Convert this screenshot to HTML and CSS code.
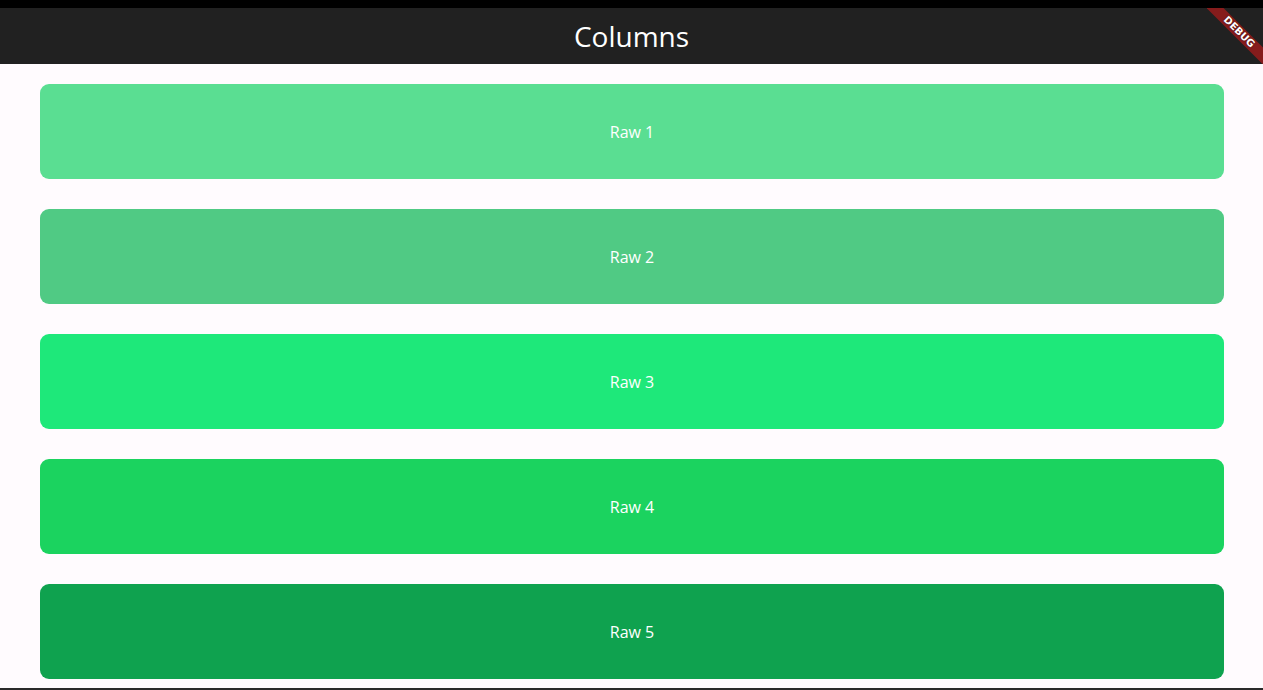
FILE: index.html
```html
<!DOCTYPE html>
<html>
<head>
<meta charset="utf-8">
<link rel="stylesheet" href="styles.css">
</head>
<body>
<div class="status"></div>
<header class="appbar"><h1 class="title">Columns</h1></header>
<main class="list">
  <div class="card c1">Raw 1</div>
  <div class="card c2">Raw 2</div>
  <div class="card c3">Raw 3</div>
  <div class="card c4">Raw 4</div>
  <div class="card c5">Raw 5</div>
</main>
<div class="bottom"></div>
<div class="banner-wrap"><div class="banner">DEBUG</div></div>
</body>
</html>
```
FILE: styles.css
```css
html, body { margin: 0; padding: 0; }
body {
  width: 1263px; height: 690px; overflow: hidden;
  background: #fffbfe;
  font-family: "Open Sans", "Noto Sans", sans-serif;
  display: flex; flex-direction: column;
  position: relative;
}
.status { height: 8px; background: #000; flex: none; }
.appbar {
  height: 56px; background: #212121; flex: none;
  display: flex; align-items: center; justify-content: center;
}
.title {
  margin: 0; color: #fff; font-weight: 400; font-size: 28px;
  font-family: "Open Sans", "Noto Sans", sans-serif;
  letter-spacing: 0;
}
.list {
  flex: 1;
  padding: 20px 39px 0 40px;
  display: flex; flex-direction: column; gap: 30px;
}
.card {
  height: 95px; border-radius: 9px;
  display: flex; align-items: center; justify-content: center;
  color: #fff; font-size: 16px;
  box-sizing: border-box;
}
.c1 { background: #5ade92; }
.c2 { background: #50ca84; }
.c3 { background: #1ee87a; }
.c4 { background: #1bd35f; }
.c5 { background: #0fa24f; }
.bottom { height: 2px; background: #2a2a2a; flex: none; }
.banner-wrap {
  position: absolute; top: 8px; right: 0; width: 56px; height: 56px; overflow: hidden;
}
.banner {
  position: absolute; top: 18px; left: -8px; width: 80px; height: 12px;
  transform: rotate(45deg);
  background: #861c1c;
  color: #fff; font-size: 10px; font-weight: 700;
  font-family: "DejaVu Sans", sans-serif;
  text-align: center; line-height: 12px;
  text-shadow: 0 0 2px rgba(0,0,0,0.5);
}
```
